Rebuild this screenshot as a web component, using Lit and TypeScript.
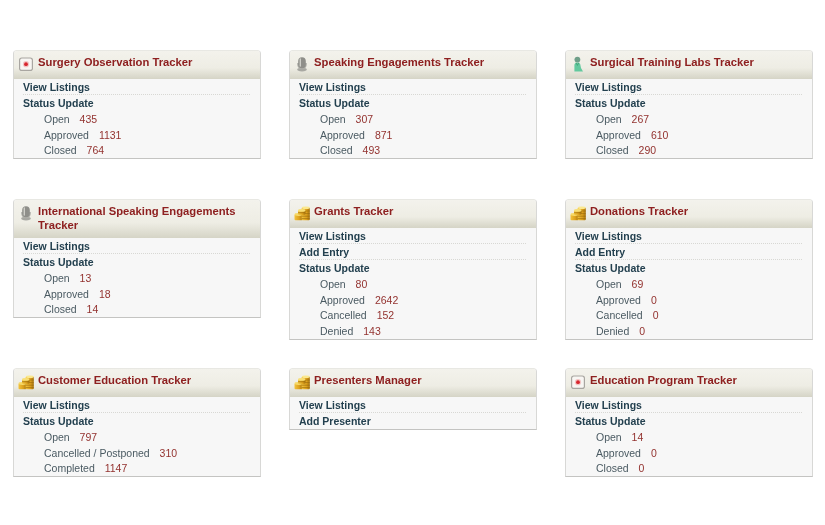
import { LitElement, html, css, svg } from "lit";
import { customElement } from "lit/decorators.js";

type Stat = [string, string];
interface Card { title: string; icon: string; links: string[]; stats?: Stat[]; }

const cards: Card[] = [
  { title: "Surgery Observation Tracker", icon: "kit", links: ["View Listings"], stats: [["Open", "435"], ["Approved", "1131"], ["Closed", "764"]] },
  { title: "Speaking Engagements Tracker", icon: "mic", links: ["View Listings"], stats: [["Open", "307"], ["Approved", "871"], ["Closed", "493"]] },
  { title: "Surgical Training Labs Tracker", icon: "person", links: ["View Listings"], stats: [["Open", "267"], ["Approved", "610"], ["Closed", "290"]] },
  { title: "International Speaking Engagements Tracker", icon: "mic", links: ["View Listings"], stats: [["Open", "13"], ["Approved", "18"], ["Closed", "14"]] },
  { title: "Grants Tracker", icon: "coins", links: ["View Listings", "Add Entry"], stats: [["Open", "80"], ["Approved", "2642"], ["Cancelled", "152"], ["Denied", "143"]] },
  { title: "Donations Tracker", icon: "coins", links: ["View Listings", "Add Entry"], stats: [["Open", "69"], ["Approved", "0"], ["Cancelled", "0"], ["Denied", "0"]] },
  { title: "Customer Education Tracker", icon: "coins", links: ["View Listings"], stats: [["Open", "797"], ["Cancelled / Postponed", "310"], ["Completed", "1147"]] },
  { title: "Presenters Manager", icon: "coins", links: ["View Listings", "Add Presenter"] },
  { title: "Education Program Tracker", icon: "kit", links: ["View Listings"], stats: [["Open", "14"], ["Approved", "0"], ["Closed", "0"]] },
];

const icons: Record<string, unknown> = {
  kit: svg`<rect x="1" y="1.4" width="14" height="13.6" rx="2.8" fill="#a9a6a1"/>
    <rect x="2.2" y="2.6" width="11.6" height="11.2" rx="1.6" fill="#f8f6f3"/>
    <circle cx="8" cy="8.2" r="3.1" fill="#f2c4c4"/>
    <circle cx="8" cy="8.2" r="1.9" fill="#d8262e"/>`,
  mic: svg`<ellipse cx="8" cy="13.6" rx="4.8" ry="1.8" fill="#a8a8a2"/>
    <path d="M3.2 7v1.5a4.8 4.8 0 0 0 9.6 0V7z" fill="#b0b0aa"/>
    <rect x="4.2" y="1.2" width="7.6" height="11" rx="3.8" fill="#8f8f8a"/>
    <path d="M6.3 3v7" stroke="#cfcfc9" stroke-width="1.4" stroke-linecap="round"/>`,
  person: svg`<circle cx="7.4" cy="3.6" r="2.9" fill="#6f9f89"/>
    <path d="M4.4 15.5V9C4.4 7.4 5.6 6.4 7.4 6.4s3 1 3 2.6l.6 3 2 3.5z" fill="#62c99e"/>
    <path d="M6 6.7 7.4 9.4l1.4-2.7" fill="none" stroke="#3f9a72" stroke-width=".8"/>`,
  coins: svg`<defs><linearGradient id="g" x1="0" x2="1" y1="0" y2="0"><stop offset="0" stop-color="#f2c23c"/><stop offset=".6" stop-color="#dca01c"/><stop offset="1" stop-color="#a8740f"/></linearGradient></defs>
    <rect x="0.5" y="9.5" width="8" height="5.8" rx="1" fill="url(#g)"/>
    <ellipse cx="4.5" cy="9.5" rx="4" ry="1.4" fill="#f6d968"/>
    <rect x="7.6" y="2.8" width="8.2" height="12.5" rx="1" fill="url(#g)"/>
    <path d="M7.6 6h8.2M7.6 8.6h8.2M7.6 11.2h8.2M7.6 13.6h8.2" stroke="#93640a" stroke-width=".6"/>
    <rect x="4" y="5.4" width="7.4" height="4.4" rx="1" fill="url(#g)"/>
    <path d="M4 7.7h7.4" stroke="#93640a" stroke-width=".6"/>
    <ellipse cx="7.7" cy="5.4" rx="3.7" ry="1.3" fill="#f8df76"/>
    <ellipse cx="11.8" cy="2.8" rx="4" ry="1.3" fill="#fbe88f"/>`,
};

@customElement("app-root")
export class AppRoot extends LitElement {
  static styles = css`
    :host {
      display: block;
      width: 825px;
      height: 525px;
      background: #fff;
      box-sizing: border-box;
      padding: 50px 0 0 13px;
      overflow: hidden;
      font-family: "Liberation Sans", Arial, sans-serif;
    }
    .grid {
      display: grid;
      grid-template-columns: repeat(3, 248px);
      grid-template-rows: 121px 141px auto;
      column-gap: 28px;
      row-gap: 28px;
      align-items: start;
      filter: blur(0.45px);
    }
    .card {
      background: #f7f7f7;
      border: 1px solid #d8d8d6;
      border-bottom: 1px solid #c4c4c2;
      border-top-color: #e8e8e3;
      border-radius: 4px 4px 0 0;
      box-sizing: border-box;
      width: 248px;
    }
    .head {
      display: flex;
      align-items: flex-start;
      gap: 4px;
      padding: 5px 8px 6px 4px;
      min-height: 28px;
      box-sizing: border-box;
      border-radius: 3px 3px 0 0;
      background: linear-gradient(#f3f2ec, #eeede4 60%, #d5d4c6);
    }
    .icon { width: 16px; height: 16px; flex: none; }
    .title {
      font-size: 11.25px;
      line-height: 13.5px;
      font-weight: 700;
      color: #8e2020;
    }
    .body { padding: 0 10px 0 9px; }
    .link {
      font-size: 10.5px;
      line-height: 16px;
      font-weight: 700;
      color: #23404f;
    }
    .link.sep {
      border-bottom: 1px dotted #d8d8d4;
      height: 16px;
      box-sizing: border-box;
    }
    .stats { padding-top: 0.8px; margin-bottom: -1px; }
    .stat {
      font-size: 10.5px;
      line-height: 15.7px;
      color: #4a5a62;
      padding-left: 21px;
    }
    .num { color: #93322f; margin-left: 7px; }
  `;

  private renderCard(c: Card) {
    const items = c.stats ? [...c.links, "Status Update"] : c.links;
    return html`<div class="card">
      <div class="head">
        <svg class="icon" viewBox="0 0 16 16">${icons[c.icon]}</svg>
        <div class="title">${c.title}</div>
      </div>
      <div class="body">
        ${items.map((l, i) => html`<div class="link ${i < items.length - 1 ? "sep" : ""}">${l}</div>`)}
        ${c.stats
          ? html`<div class="stats">${c.stats.map(([k, v]) => html`<div class="stat">${k} <span class="num">${v}</span></div>`)}</div>`
          : ""}
      </div>
    </div>`;
  }

  render() {
    return html`<div class="grid">${cards.map((c) => this.renderCard(c))}</div>`;
  }
}
